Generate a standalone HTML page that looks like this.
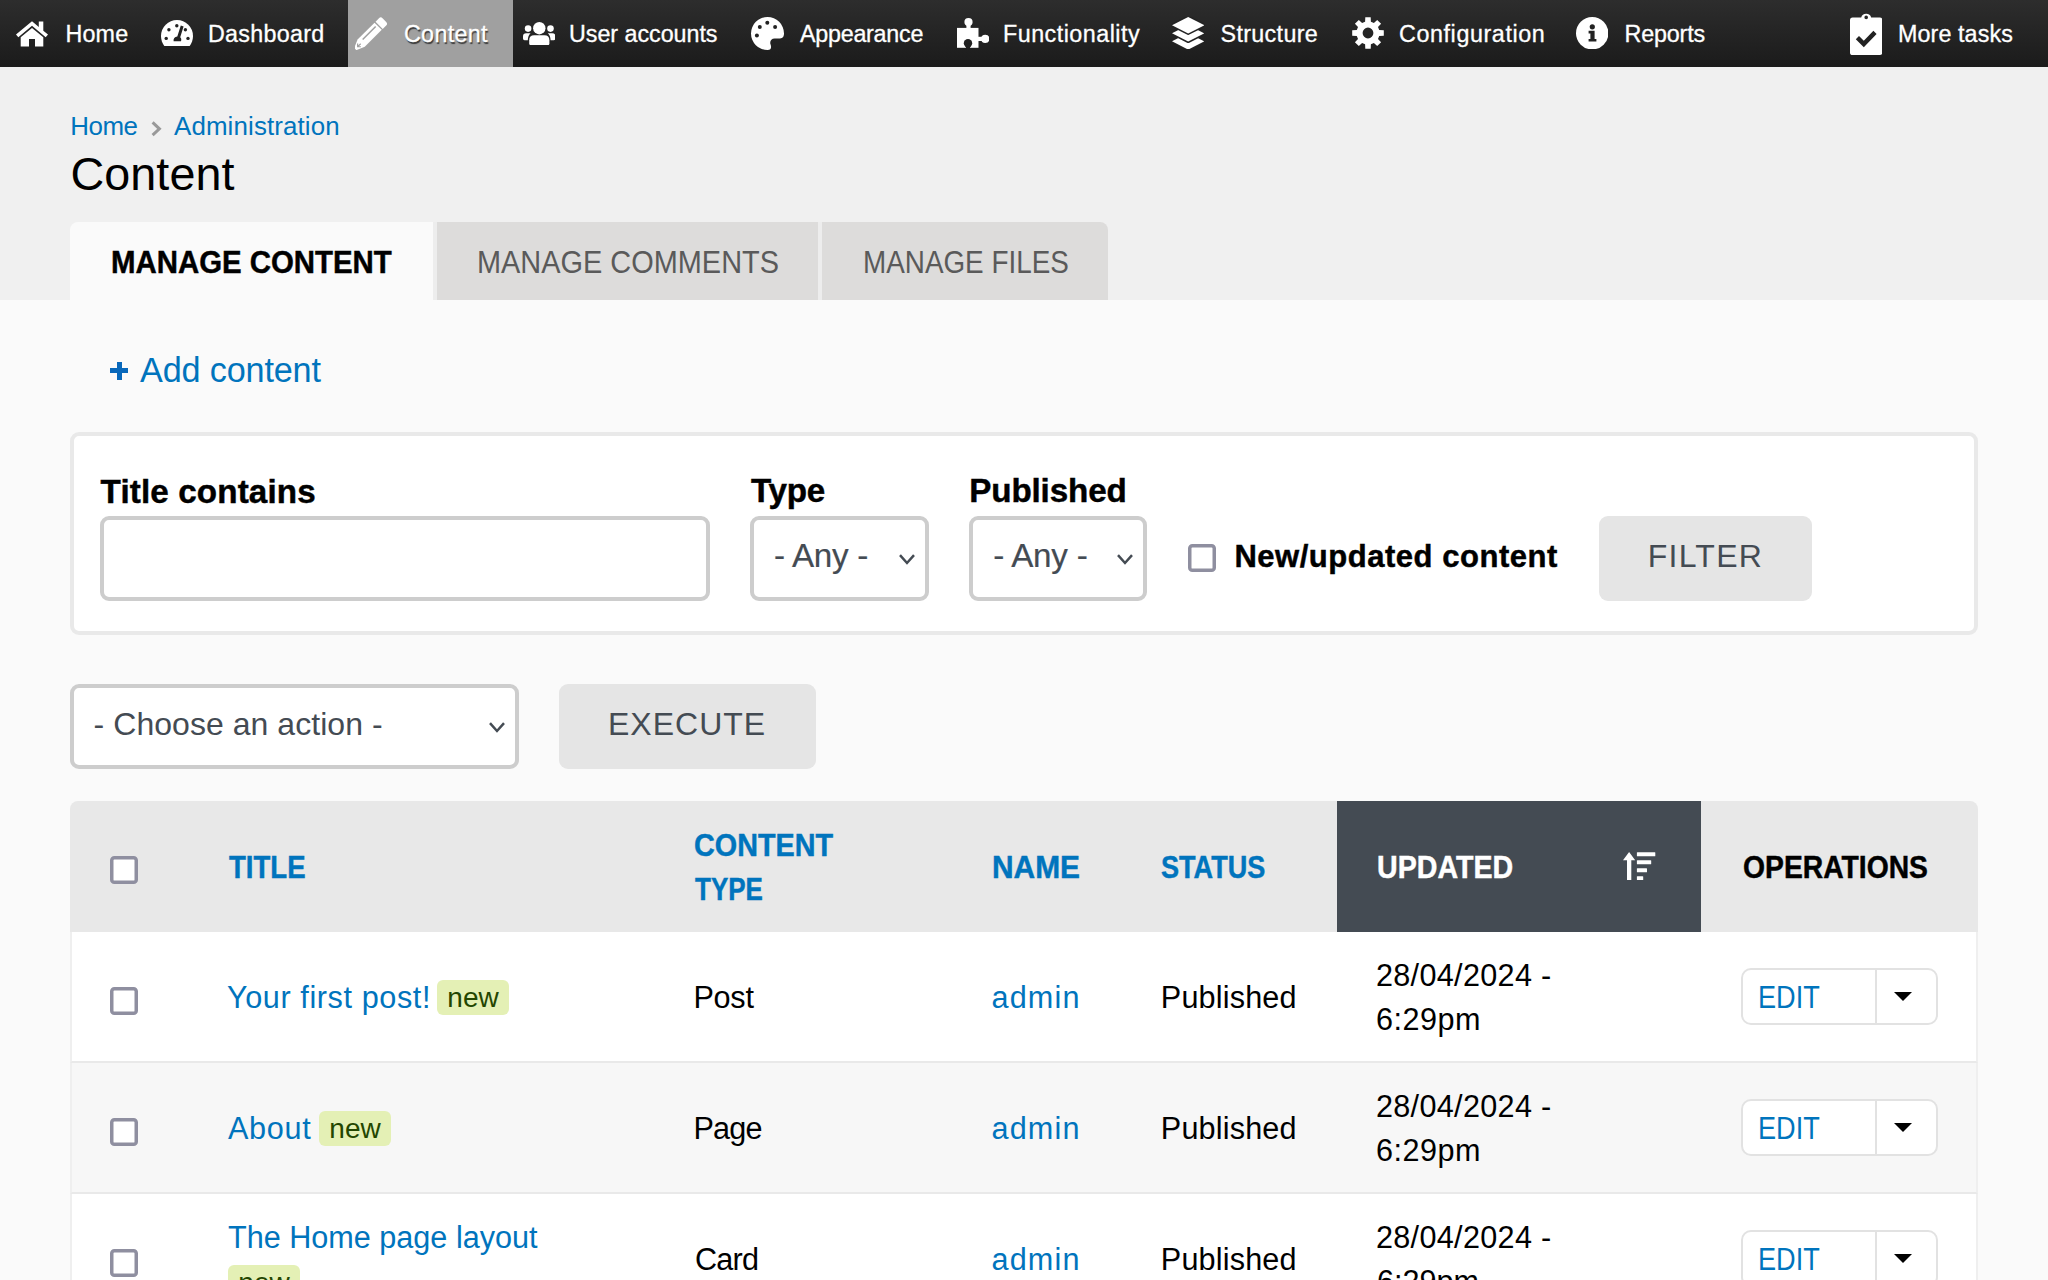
<!DOCTYPE html>
<html lang="en">
<head>
<meta charset="utf-8">
<title>Content | Backdrop CMS</title>
<style>
*{box-sizing:border-box;margin:0;padding:0}
html,body{width:2048px;height:1280px;overflow:hidden}
body{position:relative;background:#fafafa;font-family:"Liberation Sans",sans-serif;color:#000;font-size:32px}
a{color:#0074bd;text-decoration:none}

/* admin bar */
#bar{position:absolute;left:0;top:0;width:2048px;height:67px;background:linear-gradient(#2d2d2d,#1b1b1b);}
#bar .it{position:absolute;top:0;height:67px}
#bar .it svg{position:absolute;fill:#fff}
#bar .act{background:#a0a0a0}
.nv{position:absolute;top:0;-webkit-text-stroke:0.3px;color:#fff;font-size:23.3px;line-height:68px;white-space:nowrap}
.nva{text-shadow:1px 2px 1px #383838}

/* header */
#head{position:absolute;left:0;top:67px;width:2048px;height:233px;background:#f0f0f0}
.cr{position:absolute;font-size:25.9px;line-height:32px;white-space:nowrap}
h1{position:absolute;font-size:46.7px;line-height:58px;font-weight:400;white-space:nowrap}
.tab{position:absolute;top:222px;height:78px;background:#dddcdb}
.tab.on{background:#fafafa;border-radius:8px 0 0 0}
.tabsep{position:absolute;top:222px;height:78px;width:4px;background:#ededed}
.tt{position:absolute;transform-origin:0 0;font-size:31.1px;line-height:78px;white-space:nowrap;color:#5a5a5a}
.ton{color:#000;font-weight:700;-webkit-text-stroke:0.45px}

.plus{position:absolute;left:110px;top:361.5px;width:18px;height:18px}
.plus:before,.plus:after{content:"";position:absolute;background:#0868bb}
.plus:before{left:0;top:6.5px;width:18px;height:5px}
.plus:after{left:6.5px;top:0;width:5px;height:18px}
.addt{position:absolute;font-size:34.2px;line-height:48px;white-space:nowrap}

/* filter box */
.fbox{position:absolute;left:70px;top:432px;width:1908px;height:203px;border:4px solid #e9e9e9;border-radius:9px;background:#fff}
label{position:absolute;-webkit-text-stroke:0.45px;font-weight:700;font-size:33.2px;line-height:44px;white-space:nowrap}
label.sm{font-size:31px}
.inp{position:absolute;height:85px;border:4px solid #cdcdcd;border-radius:9px;background:#fff}
.sel{position:absolute;height:85px;border:4px solid #cdcdcd;border-radius:9px;background:#fff}
.st{position:absolute;-webkit-text-stroke:0.2px;color:#444b53;font-size:33.2px;line-height:83px;white-space:nowrap}
.st2{position:absolute;color:#444b53;font-size:32px;line-height:83px;white-space:nowrap}
.btn{position:absolute;height:85px;border-radius:9px;background:#e5e5e5}
.bt{position:absolute;color:#444b53;font-size:32px;line-height:83px;white-space:nowrap}
.cbx{position:absolute;width:28px;height:28px}

/* table */
.thead{position:absolute;left:70px;top:801px;width:1908px;height:131px;background:#e8e8e8;border-radius:8px 8px 0 0}
.th{position:absolute;-webkit-text-stroke:0.45px;transform-origin:0 0;font-weight:700;font-size:30.6px;line-height:44.3px;white-space:nowrap}
.upd{position:absolute;left:1337px;top:801px;width:364px;height:131px;background:#444b53}
.row{position:absolute;left:70px;width:1908px;height:131px;background:#fff;border-left:2px solid #efefef;border-right:2px solid #efefef;border-bottom:2px solid #e9e9e9}
.row.alt{background:#f7f7f7}
.td{position:absolute;transform-origin:0 0;font-size:30.6px;line-height:44.3px;white-space:nowrap}
.new{position:absolute;height:35px;width:72px;border-radius:6px;background:#e4f0b5;color:#234600;font-size:28px;line-height:35px;text-align:center}
.ops{position:absolute;left:1741px;width:197px;height:57px;border:2px solid #e2e2e2;border-radius:10px;background:#fff}
.ops i{position:absolute;left:132px;top:0;width:2px;height:53px;background:#e2e2e2}
.ops em{position:absolute;left:151px;top:22px;width:0;height:0;border-left:9px solid transparent;border-right:9px solid transparent;border-top:9px solid #000}
</style>
</head>
<body>
<div id="bar">
<div class="it" style="left:0;width:150px"><svg style="left:16px;top:20.5px;width:32px;height:26px" viewBox="0 0 32 26"><path d="M16 0.2 L0 13.6 L2.3 16.2 L16 4.7 L29.7 16.2 L32 13.6 L27.3 9.7 V0.4 H22.8 V5.9 Z"/><path d="M16 6.9 L4.7 16.3 V25.6 H13 V18 H19 V25.6 H27.3 V16.3 Z"/></svg><a href="#" class="nv" style="left:65.50px;top:0.00px;letter-spacing:0.150px;">Home</a></div>
<div class="it" style="left:150px;width:198px"><svg style="left:11px;top:20px;width:32px;height:26.4px" viewBox="0 0 32 26.4"><path d="M0 16 A16 16 0 0 1 32 16 C32 20 30.6 23.6 28.4 26.4 H3.6 C1.4 23.6 0 20 0 16 Z"/><g fill="#222"><circle cx="7.9" cy="9.8" r="1.7"/><circle cx="15.8" cy="5.8" r="1.7"/><circle cx="24.4" cy="9.8" r="1.7"/><circle cx="5.2" cy="18.4" r="1.7"/><circle cx="27" cy="18.4" r="1.7"/><path d="M19.8 5.6 L22.6 6.5 L19.2 17.3 C20.3 18.2 20.6 19.7 20 21.2 H12.6 C12.2 19 13.6 17 16.3 16.6 Z"/></g></svg><a href="#" class="nv" style="left:58.00px;top:0.00px;letter-spacing:0.281px;">Dashboard</a></div>
<div class="it act" style="left:348px;width:165px"><svg style="left:6.9px;top:16.5px;width:33px;height:33px" viewBox="0 0 33 33"><g transform="translate(0.3 32.1) rotate(-45)"><path d="M0 -1.5 L8.3 -5.1 H32.3 V5.1 H8.3 L0 1.5 Z"/><path d="M33.7 -5.1 H38.6 Q41.1 -5.1 41.1 -2.6 V2.6 Q41.1 5.1 38.6 5.1 H33.7 Z"/><path d="M12 -1.6 H30.4" stroke="#a0a0a0" stroke-width="1.5" fill="none"/><path d="M5.6 -2.3 L3.3 0 L5.6 2.3 M3.5 0 H7.6" stroke="#a0a0a0" stroke-width="1.2" fill="none"/></g></svg><a href="#" class="nv nva" style="left:56.00px;top:0.00px;letter-spacing:0.300px;">Content</a></div>
<div class="it" style="left:513px;width:228px"><svg style="left:10px;top:21.5px;width:32.4px;height:23.6px" viewBox="0 0 32.4 23.6"><circle cx="16.3" cy="6.2" r="6.2"/><path d="M6.2 21.2 V18.2 Q6.2 13.2 11.2 13.2 H21.4 Q26.4 13.2 26.4 18.2 V21.2 Q26.4 23.6 24 23.6 H8.6 Q6.2 23.6 6.2 21.2 Z"/><circle cx="5.1" cy="6.6" r="3.3"/><circle cx="27.5" cy="6.6" r="3.3"/><path d="M0 16.6 V14.4 Q0 11.2 3.2 11.2 H7.6 Q5 13.4 4.8 18.2 H1.6 Q0 18.2 0 16.6 Z"/><path d="M32.4 16.6 V14.4 Q32.4 11.2 29.2 11.2 H24.8 Q27.4 13.4 27.6 18.2 H30.8 Q32.4 18.2 32.4 16.6 Z"/></svg><a href="#" class="nv" style="left:56.00px;top:0.00px;letter-spacing:-0.035px;">User accounts</a></div>
<div class="it" style="left:741px;width:206px"><svg style="left:10px;top:17px;width:33px;height:33px" viewBox="0 0 33 33"><path d="M16.5 0 A16.5 16.5 0 0 0 16.5 33 C20.2 33 20.6 30.2 19.6 27.6 C18.4 24.4 20.2 21.4 23.6 21.4 H29 C32 21.4 33 19 33 16.5 A16.5 16.5 0 0 0 16.5 0 Z"/><g fill="#222"><circle cx="5.9" cy="18.4" r="2"/><circle cx="8.8" cy="9.9" r="2"/><circle cx="16.3" cy="5.7" r="2"/><circle cx="24.1" cy="9.9" r="2"/></g></svg><a href="#" class="nv" style="left:59.00px;top:0.00px;letter-spacing:-0.250px;">Appearance</a></div>
<div class="it" style="left:947px;width:216px"><svg style="left:9.7px;top:17.9px;width:32.4px;height:29.8px" viewBox="0 0 32.4 29.8"><rect x="0" y="9.9" width="21.5" height="19.9"/><circle cx="11.5" cy="4.1" r="4.1"/><rect x="9.4" y="6" width="4.2" height="5"/><circle cx="28.3" cy="20.9" r="4.1"/><rect x="21" y="18.8" width="5.5" height="4.2"/><g fill="#212121"><circle cx="11" cy="25.3" r="4.2"/><rect x="8.9" y="26" width="4.2" height="4"/></g></svg><a href="#" class="nv" style="left:56.00px;top:0.00px;letter-spacing:0.487px;">Functionality</a></div>
<div class="it" style="left:1163px;width:178px"><svg style="left:8.9px;top:16.6px;width:32.4px;height:32.6px" viewBox="0 0 32.4 32.6"><g stroke="#232323" stroke-width="3" paint-order="stroke" stroke-linejoin="round"><path d="M16.2 16.1 L32.4 24.35 L16.2 32.6 L0 24.35 Z"/><path d="M16.2 8.1 L32.4 16.35 L16.2 24.6 L0 16.35 Z"/><path d="M16.2 0 L32.4 8.25 L16.2 16.5 L0 8.25 Z"/></g></svg><a href="#" class="nv" style="left:57.50px;top:0.00px;letter-spacing:0.338px;">Structure</a></div>
<div class="it" style="left:1341px;width:226px"><svg style="left:10.8px;top:16.8px;width:32px;height:32px" viewBox="0 0 32 32"><path fill-rule="evenodd" d="M13.1 4.8 L13.3 0.2 L18.7 0.2 L18.9 4.8 L21.9 6.0 L25.2 2.9 L29.1 6.8 L26.0 10.1 L27.2 13.1 L31.8 13.3 L31.8 18.7 L27.2 18.9 L26.0 21.9 L29.1 25.2 L25.2 29.1 L21.9 26.0 L18.9 27.2 L18.7 31.8 L13.3 31.8 L13.1 27.2 L10.1 26.0 L6.8 29.1 L2.9 25.2 L6.0 21.9 L4.8 18.9 L0.2 18.7 L0.2 13.3 L4.8 13.1 L6.0 10.1 L2.9 6.8 L6.8 2.9 L10.1 6.0Z M16 10.6 A5.4 5.4 0 1 0 16 21.4 A5.4 5.4 0 1 0 16 10.6Z"/></svg><a href="#" class="nv" style="left:58.00px;top:0.00px;letter-spacing:0.600px;">Configuration</a></div>
<div class="it" style="left:1567px;width:160px"><svg style="left:8.8px;top:16.8px;width:32.4px;height:32.4px" viewBox="0 0 32.4 32.4"><circle cx="16.2" cy="16.2" r="16.2"/><g fill="#222"><circle cx="16.3" cy="9.8" r="2.6"/><path d="M12.6 13.8 H18.6 V22 H20.4 V24.6 H12.6 V22 H14.4 V16.4 H12.6 Z"/></g></svg><a href="#" class="nv" style="left:57.50px;top:0.00px;letter-spacing:-0.150px;">Reports</a></div>
<div class="it" style="left:1840px;width:208px"><svg style="left:9.8px;top:12px;width:32.4px;height:43px" viewBox="0 0 32.4 43"><path fill-rule="evenodd" d="M2.6 5.6 H11.2 A5.2 5.2 0 0 1 21.2 5.6 H29.8 Q32.4 5.6 32.4 8.2 V40.4 Q32.4 43 29.8 43 H2.6 Q0 43 0 40.4 V8.2 Q0 5.6 2.6 5.6 Z M16.2 3.6 A1.8 1.8 0 1 0 16.2 7.2 A1.8 1.8 0 1 0 16.2 3.6 Z"/><path fill="#222" d="M5.8 27.2 L9 24 L13.8 28.8 L23.4 18.8 L26.6 22 L13.8 35.2 Z"/></svg><a href="#" class="nv" style="left:58.00px;top:0.00px;letter-spacing:0.100px;">More tasks</a></div>
</div>
<div id="head"></div>
<a class="cr" href="#" style="left:70.30px;top:110.00px;letter-spacing:-0.450px;">Home</a><svg style="position:absolute;left:150.5px;top:120.5px;width:11px;height:16px" viewBox="0 0 11 16"><path d="M1.6 1.4 L8.4 7.8 L1.6 14.2" fill="none" stroke="#999" stroke-width="3"/></svg><a class="cr" href="#" style="left:174.00px;top:110.00px;letter-spacing:0.123px;">Administration</a>
<h1 style="left:70.50px;top:145.00px;letter-spacing:0.075px;">Content</h1>
<div class="tab on" style="left:70px;width:363px"><div class="tt ton" style="left:41.20px;top:2.00px;letter-spacing:0.000px;transform:scaleX(0.9450);">MANAGE CONTENT</div></div><div class="tabsep" style="left:433px"></div><div class="tab" style="left:437px;width:381px"><div class="tt" style="left:39.50px;top:2.00px;letter-spacing:0.000px;transform:scaleX(0.9298);">MANAGE COMMENTS</div></div><div class="tabsep" style="left:818px"></div><div class="tab" style="left:822px;width:286px;border-radius:0 8px 0 0"><div class="tt" style="left:40.60px;top:2.00px;letter-spacing:0.000px;transform:scaleX(0.8956);">MANAGE FILES</div></div>
<b class="plus"></b><a class="addt" href="#" style="left:140.00px;top:346.00px;letter-spacing:-0.153px;">Add content</a>
<div class="fbox"></div>
<label style="left:100.60px;top:470.00px;letter-spacing:0.134px;">Title contains</label><div class="inp" style="left:100px;top:516px;width:610px"></div>
<label style="left:751.00px;top:469.00px;letter-spacing:-0.300px;">Type</label><div class="sel" style="left:750px;top:516px;width:179px"><div class="st" style="left:20.00px;top:-6.00px;letter-spacing:-0.270px;">- Any -</div><svg style="position:absolute;left:145px;top:34px;width:16px;height:11px" viewBox="0 0 16 11"><path d="M1 1.2 L8 9 L15 1.2" fill="none" stroke="#444b53" stroke-width="2.5"/></svg></div>
<label style="left:969.30px;top:469.00px;letter-spacing:-0.145px;">Published</label><div class="sel" style="left:969px;top:516px;width:178px"><div class="st" style="left:20.25px;top:-6.00px;letter-spacing:-0.242px;">- Any -</div><svg style="position:absolute;left:144px;top:34px;width:16px;height:11px" viewBox="0 0 16 11"><path d="M1 1.2 L8 9 L15 1.2" fill="none" stroke="#444b53" stroke-width="2.5"/></svg></div>
<svg class="cbx" style="left:1188px;top:544px" viewBox="0 0 28 28"><rect x="1.75" y="1.75" width="24.5" height="24.5" rx="2.6" fill="#fff" stroke="#8f8fa0" stroke-width="3.5"/></svg><label class="sm" style="left:1234.40px;top:534.50px;letter-spacing:0.525px;">New/updated content</label>
<div class="btn" style="left:1599px;top:516px;width:213px"><div class="bt" style="left:48.70px;top:-1.50px;letter-spacing:1.260px;">FILTER</div></div>
<div class="sel" style="left:70px;top:684px;width:449px"><div class="st2" style="left:19.60px;top:-5.00px;letter-spacing:0.043px;">- Choose an action -</div><svg style="position:absolute;left:415px;top:33.5px;width:16px;height:11px" viewBox="0 0 16 11"><path d="M1 1.2 L8 9 L15 1.2" fill="none" stroke="#444b53" stroke-width="2.5"/></svg></div>
<div class="btn" style="left:559px;top:684px;width:257px"><div class="bt" style="left:49.00px;top:-1.50px;letter-spacing:1.005px;">EXECUTE</div></div>
<div class="thead"></div><div class="upd"></div><svg class="cbx" style="left:110px;top:856px" viewBox="0 0 28 28"><rect x="1.75" y="1.75" width="24.5" height="24.5" rx="2.6" fill="#fff" stroke="#8f8fa0" stroke-width="3.5"/></svg>
<a class="th" href="#" style="left:229.20px;top:845.00px;letter-spacing:0.000px;transform:scaleX(0.9016);">TITLE</a><a class="th" href="#" style="left:694.40px;top:823.00px;letter-spacing:0.000px;transform:scaleX(0.9399);">CONTENT</a><a class="th" href="#" style="left:695.40px;top:867.30px;letter-spacing:0.000px;transform:scaleX(0.8496);">TYPE</a><a class="th" href="#" style="left:991.60px;top:845.00px;letter-spacing:0.000px;transform:scaleX(0.9771);">NAME</a><a class="th" href="#" style="left:1160.75px;top:845.00px;letter-spacing:0.000px;transform:scaleX(0.8849);">STATUS</a><a class="th" href="#" style="left:1376.60px;top:845.00px;letter-spacing:0.000px;transform:scaleX(0.9349);color:#fff">UPDATED</a>
<svg style="position:absolute;left:1623px;top:851.7px;width:32.5px;height:28.3px" viewBox="0 0 32.5 28.3"><g fill="#fff"><path d="M0 8.2 L6.1 0 L12.2 8.2 H8.3 V28.3 H4 V8.2 Z"/><rect x="13.9" y="0.2" width="18.4" height="4.1" rx="0.5"/><rect x="13.9" y="8.2" width="14.3" height="4.1" rx="0.5"/><rect x="13.9" y="16.2" width="10.1" height="4.1" rx="0.5"/><rect x="13.9" y="24.2" width="6.3" height="4.1" rx="0.5"/></g></svg>
<div class="th" style="left:1742.70px;top:845.00px;letter-spacing:0.000px;transform:scaleX(0.9248);">OPERATIONS</div>
<div class="row" style="top:932px"></div><svg class="cbx" style="left:110px;top:987px" viewBox="0 0 28 28"><rect x="1.75" y="1.75" width="24.5" height="24.5" rx="2.6" fill="#fff" stroke="#8f8fa0" stroke-width="3.5"/></svg>
<a class="td" href="#" style="left:227.00px;top:975.00px;letter-spacing:0.600px;">Your first post!</a><div class="new" style="left:437px;top:980px">new</div>
<div class="td" style="left:693.40px;top:975.00px;letter-spacing:-0.240px;">Post</div><a class="td" href="#" style="left:991.50px;top:975.00px;letter-spacing:1.157px;">admin</a><div class="td" style="left:1160.80px;top:975.00px;letter-spacing:0.173px;">Published</div><div class="td" style="left:1375.90px;top:953.00px;letter-spacing:0.327px;">28/04/2024 -</div><div class="td" style="left:1375.90px;top:997.30px;letter-spacing:0.486px;">6:29pm</div>
<div class="ops" style="top:968px"><a class="td" href="#" style="left:14.80px;top:4.50px;letter-spacing:0.000px;transform:scaleX(0.8857);">EDIT</a><i></i><em></em></div>
<div class="row alt" style="top:1063px"></div><svg class="cbx" style="left:110px;top:1118px" viewBox="0 0 28 28"><rect x="1.75" y="1.75" width="24.5" height="24.5" rx="2.6" fill="#fff" stroke="#8f8fa0" stroke-width="3.5"/></svg>
<a class="td" href="#" style="left:228.00px;top:1106.00px;letter-spacing:0.675px;">About</a><div class="new" style="left:319px;top:1111px">new</div>
<div class="td" style="left:693.40px;top:1106.00px;letter-spacing:-0.800px;">Page</div><a class="td" href="#" style="left:991.50px;top:1106.00px;letter-spacing:1.157px;">admin</a><div class="td" style="left:1160.80px;top:1106.00px;letter-spacing:0.173px;">Published</div><div class="td" style="left:1375.90px;top:1084.00px;letter-spacing:0.327px;">28/04/2024 -</div><div class="td" style="left:1375.90px;top:1128.30px;letter-spacing:0.486px;">6:29pm</div>
<div class="ops" style="top:1099px"><a class="td" href="#" style="left:14.80px;top:4.50px;letter-spacing:0.000px;transform:scaleX(0.8857);">EDIT</a><i></i><em></em></div>
<div class="row" style="top:1194px"></div><svg class="cbx" style="left:110px;top:1249px" viewBox="0 0 28 28"><rect x="1.75" y="1.75" width="24.5" height="24.5" rx="2.6" fill="#fff" stroke="#8f8fa0" stroke-width="3.5"/></svg>
<a class="td" href="#" style="left:228.00px;top:1215.00px;letter-spacing:0.000px;">The Home page layout</a><div class="new" style="left:228px;top:1265px">new</div>
<div class="td" style="left:694.90px;top:1237.00px;letter-spacing:-0.720px;">Card</div><a class="td" href="#" style="left:991.50px;top:1237.00px;letter-spacing:1.157px;">admin</a><div class="td" style="left:1160.80px;top:1237.00px;letter-spacing:0.173px;">Published</div><div class="td" style="left:1375.90px;top:1215.00px;letter-spacing:0.327px;">28/04/2024 -</div><div class="td" style="left:1377px;top:1259.3px">6:29pm</div>
<div class="ops" style="top:1230px"><a class="td" href="#" style="left:14.80px;top:4.50px;letter-spacing:0.000px;transform:scaleX(0.8857);">EDIT</a><i></i><em></em></div>
</body>
</html>
